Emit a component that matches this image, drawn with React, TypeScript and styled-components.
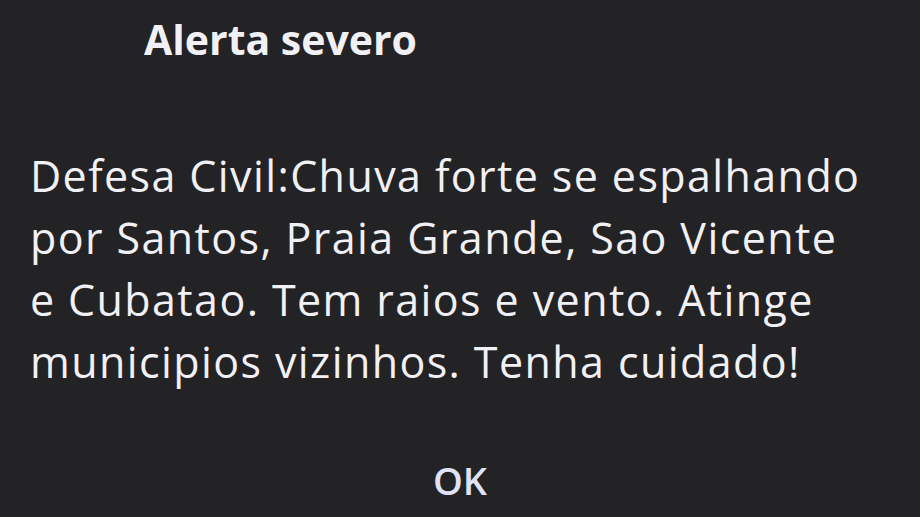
import React from "react";
import styled, { createGlobalStyle } from "styled-components";

const GlobalStyle = createGlobalStyle`
  html, body {
    margin: 0;
    padding: 0;
    background: #232225;
  }
`;

const lines = [
  "Defesa Civil:Chuva forte se espalhando",
  "por Santos, Praia Grande, Sao Vicente",
  "e Cubatao. Tem raios e vento. Atinge",
  "municipios vizinhos. Tenha cuidado!",
];

const App = () => {
  return (
    <>
      <GlobalStyle />
      <Dialog>
        <Title>Alerta severo</Title>
        <Message>
          {lines.map((line) => (
            <Line key={line}>{line}</Line>
          ))}
        </Message>
        <Actions>
          <OkButton type="button">OK</OkButton>
        </Actions>
      </Dialog>
    </>
  );
};

const Dialog = styled.div`
  width: 920px;
  height: 517px;
  background-color: #232225;
  display: flex;
  flex-direction: column;
  overflow: hidden;
  font-family: "Open Sans", Roboto, sans-serif;
  color: #f1f0f4;
`;

const Title = styled.div`
  padding: 13px 0 0 144px;
  font-size: 41px;
  font-weight: 700;
  line-height: 52px;
`;

const Message = styled.div`
  margin-top: 80px;
  padding-left: 30px;
  display: flex;
  flex-direction: column;
`;

const Line = styled.div`
  font-size: 43px;
  font-weight: 400;
  line-height: 62px;
  letter-spacing: 1.4px;
  white-space: nowrap;
`;

const Actions = styled.div`
  display: flex;
  justify-content: center;
  margin-top: 63px;
`;

const OkButton = styled.button`
  background: none;
  border: none;
  padding: 0;
  font-family: inherit;
  font-size: 38px;
  font-weight: 600;
  line-height: 48px;
  color: #dfe2f8;
  cursor: pointer;
`;

export default App;
